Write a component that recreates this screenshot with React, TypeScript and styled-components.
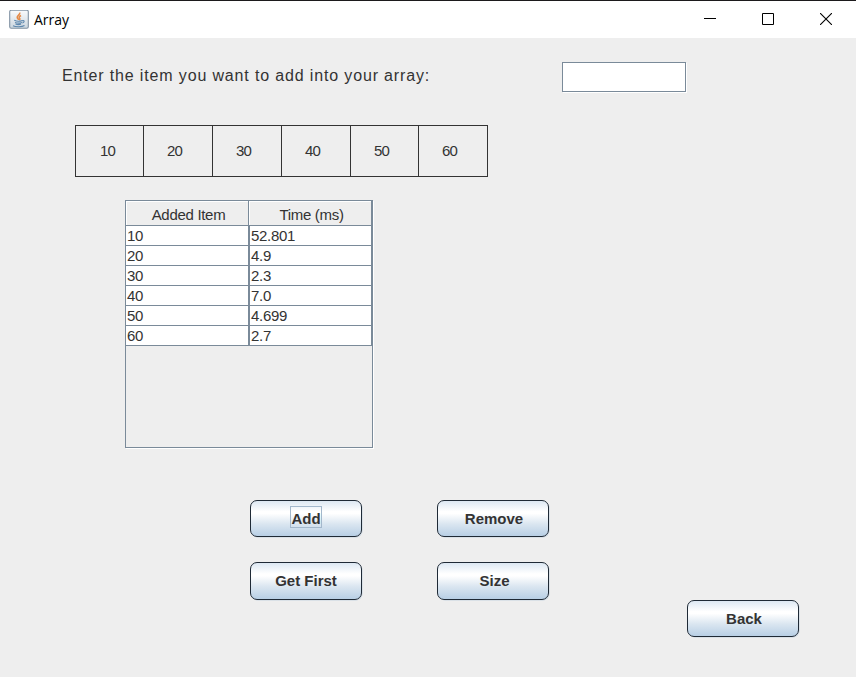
import React from "react";
import styled, { createGlobalStyle } from "styled-components";

const Global = createGlobalStyle`
  * { box-sizing: border-box; }
  html, body { margin: 0; padding: 0; background: #fff; overflow: hidden; }
`;

const Window = styled.div`
  width: 856px;
  height: 677px;
  display: flex;
  flex-direction: column;
  background: #eeeeee;
  color: #333333;
  font-family: "Liberation Sans", Arial, sans-serif;
`;

const TitleBar = styled.header`
  flex: none;
  height: 38px;
  display: flex;
  align-items: center;
  padding: 0 1px 0 9px;
  background: #fff;
  border-top: 1px solid #1c1a1c;
`;

const Title = styled.span`
  flex: 1;
  margin-left: 5px;
  color: #000;
  font: 14px/20px "Open Sans", "Noto Sans", sans-serif;
`;

const Controls = styled.div`
  display: flex;
  margin-bottom: 1px;
`;

const ControlButton = styled.div`
  width: 58px;
  height: 36px;
  display: grid;
  place-items: center;
`;

const Content = styled.main`
  flex: 1;
  display: flex;
  flex-direction: column;
`;

const EntryRow = styled.div`
  height: 31px;
  margin: 24px 0 0 62px;
  display: flex;
`;

const Prompt = styled.label`
  width: 500px;
  padding-top: 4px;
  font-size: 16px;
  line-height: 19px;
  letter-spacing: 0.85px;
  white-space: nowrap;
`;

const Field = styled.input`
  width: 124px;
  height: 30px;
  border: 1px solid #7a8a99;
  border-radius: 0;
  background: #fff;
  box-shadow: 1px 1px 0 #fff;
  outline: none;
`;

const ArrayStrip = styled.div`
  width: 413px;
  height: 52px;
  margin: 32px 0 0 75px;
  display: grid;
  grid-template-columns: 67px 69px 69px 69px 68px 69px;
  border: 1px solid #333;
`;

const ArrayCell = styled.div`
  padding-left: 23px;
  border-left: 1px solid #333;
  font-size: 15px;
  line-height: 49px;
  letter-spacing: -0.8px;
  &:first-child { border-left: 0; padding-left: 24px; }
`;

const ScrollPane = styled.div`
  width: 248px;
  height: 248px;
  margin: 23px 0 0 125px;
  border: 1px solid #7a8a99;
  box-shadow: 1px 1px 0 #fff;
`;

const TableRow = styled.div`
  display: grid;
  grid-template-columns: 123px 123px;
`;

const HeaderCell = styled.div`
  height: 25px;
  padding-left: 3px;
  border: solid #7a8a99;
  border-width: 0 1px 1px 0;
  box-shadow: inset 1px 1px 0 #fff;
  text-align: center;
  font-size: 15px;
  line-height: 27px;
  letter-spacing: -0.3px;
`;

const Cell = styled.div<{ $last?: boolean }>`
  height: 20px;
  padding-left: 1px;
  border: solid #7a8a99;
  border-width: 0 1px 1px ${(p) => (p.$last ? 1 : 0)}px;
  background: #fff;
  font-size: 15px;
  line-height: 20px;
  letter-spacing: -0.3px;
`;

const ButtonGrid = styled.div`
  margin: 52px 0 0 250px;
  display: grid;
  grid-template-columns: 112px 112px;
  grid-template-rows: 37px 38px;
  gap: 25px 75px;
`;

const MetalButton = styled.button`
  width: 112px;
  height: 100%;
  padding: 5px 0 0;
  display: flex;
  align-items: flex-start;
  justify-content: center;
  border: 1px solid #1f2a36;
  border-radius: 7px;
  background: linear-gradient(#dde8f3 0%, #fff 30%, #fff 36%, #dce7f1 64%, #b8cfe5 100%);
  box-shadow: 1px 1px 0 -0.5px #c5d3e0;
  color: #333;
  font: bold 15px/18px "Liberation Sans", Arial, sans-serif;
`;

const FocusLabel = styled.span<{ $focused?: boolean; $shift?: number }>`
  height: 22px;
  line-height: 26px;
  margin-left: ${(p) => p.$shift ?? 0}px;
  outline: ${(p) => (p.$focused ? "1px solid #a3b8cc" : "none")};
  outline-offset: -1px;
  padding: 0 1px;
`;

const Footer = styled.div`
  height: 37px;
  margin-left: 687px;
`;

const JavaIcon = () => (
  <svg width="20" height="20" viewBox="0 0 20 20" fill="none">
    <defs>
      <linearGradient id="face" x1="0" y1="0" x2="0" y2="1">
        <stop stopColor="#fafbfc" />
        <stop offset="1" stopColor="#cbd6df" />
      </linearGradient>
    </defs>
    <rect x=".7" y=".2" width="18.6" height="18" rx="1.5" fill="url(#face)" stroke="#8192a3" strokeWidth="1.1" />
    <path d="M10.7 2.5c1 2-3 3-2.5 5 .2 1 1.3 1.4 1.4 2.3M12 5.5c-2.3 1.3-2.2 2-1.2 3 .5.7 0 1.2-.6 1.7" stroke="#e58b48" strokeWidth="1.5" />
    <path d="M5.3 10.3c2 1 6 1 8.2.1M6 12.4c2 .8 5 .8 7 0M6.5 14.1c2 .7 4 .7 5.6 0M4 15.7c2.5 1.4 9 1.3 11.5-.2M13.5 10.7c2.3-.5 2.1 1.8-.2 2.3" stroke="#5d87ad" strokeWidth="1.1" />
  </svg>
);

const items = ["10", "20", "30", "40", "50", "60"];
const times = ["52.801", "4.9", "2.3", "7.0", "4.699", "2.7"];

export default function App() {
  return (
    <>
      <Global />
      <Window>
        <TitleBar>
          <JavaIcon />
          <Title>Array</Title>
          <Controls>
            <ControlButton>
              <svg width="12" height="12"><path d="M0 5.5h12" stroke="#000" /></svg>
            </ControlButton>
            <ControlButton>
              <svg width="12" height="12"><path d="M.5.5h11v11H.5z" fill="none" stroke="#000" /></svg>
            </ControlButton>
            <ControlButton>
              <svg width="12" height="12"><path d="M0 0l12 12M12 0L0 12" stroke="#000" strokeWidth="1.1" /></svg>
            </ControlButton>
          </Controls>
        </TitleBar>
        <Content>
          <EntryRow>
            <Prompt htmlFor="item">Enter the item you want to add into your array:</Prompt>
            <Field id="item" />
          </EntryRow>
          <ArrayStrip>
            {items.map((item) => <ArrayCell key={item}>{item}</ArrayCell>)}
          </ArrayStrip>
          <ScrollPane>
            <TableRow>
              <HeaderCell>Added Item</HeaderCell>
              <HeaderCell>Time (ms)</HeaderCell>
            </TableRow>
            {items.map((item, i) => (
              <TableRow key={item}>
                <Cell>{item}</Cell>
                <Cell $last>{times[i]}</Cell>
              </TableRow>
            ))}
          </ScrollPane>
          <ButtonGrid>
            <MetalButton><FocusLabel $focused>Add</FocusLabel></MetalButton>
            <MetalButton><FocusLabel $shift={2}>Remove</FocusLabel></MetalButton>
            <MetalButton><FocusLabel>Get First</FocusLabel></MetalButton>
            <MetalButton><FocusLabel $shift={3}>Size</FocusLabel></MetalButton>
          </ButtonGrid>
          <Footer>
            <MetalButton><FocusLabel $shift={2}>Back</FocusLabel></MetalButton>
          </Footer>
        </Content>
      </Window>
    </>
  );
}
